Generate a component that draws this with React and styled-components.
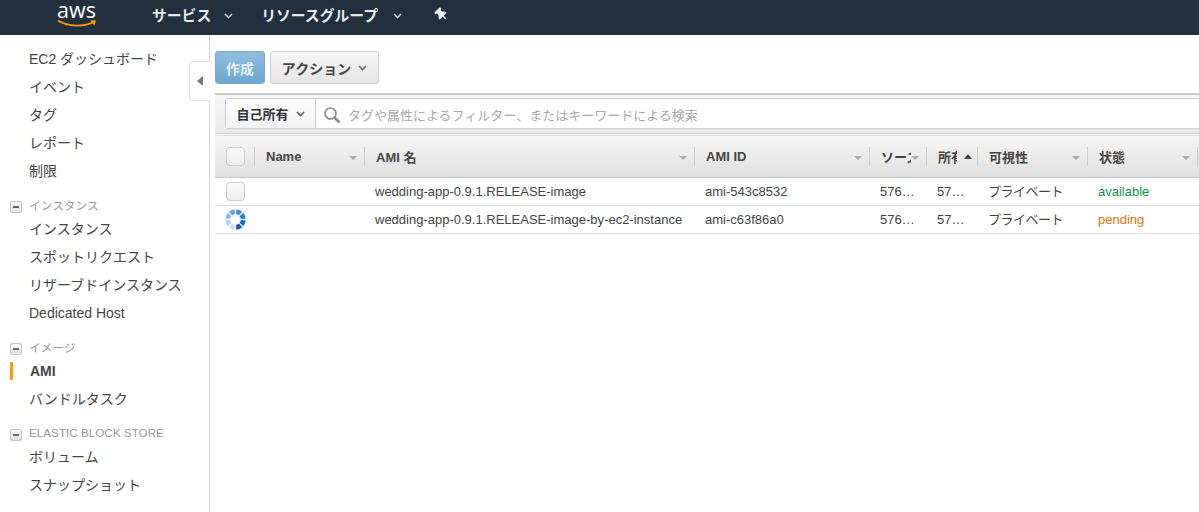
import React from "react";
import styled, { createGlobalStyle } from "styled-components";
import { FaThumbtack } from "react-icons/fa";

const GlobalStyle = createGlobalStyle`
  html, body {
    margin: 0;
    padding: 0;
    height: 100%;
    overflow: hidden;
    background: #fff;
  }
  body {
    font-family: "Liberation Sans", "Noto Sans CJK JP", sans-serif;
    color: #444;
  }
`;

const columnTemplate = "40px 110px 330px 175px 57px 51px 110px 110px";

const columns = [
  { label: "Name" },
  { label: "AMI 名" },
  { label: "AMI ID" },
  { label: "ソース", clip: 16 },
  { label: "所有者", clip: 21, sorted: true },
  { label: "可視性" },
  { label: "状態" },
];

const images = [
  {
    name: "wedding-app-0.9.1.RELEASE-image",
    id: "ami-543c8532",
    state: "available",
  },
  {
    name: "wedding-app-0.9.1.RELEASE-image-by-ec2-instance",
    id: "ami-c63f86a0",
    state: "pending",
    busy: true,
  },
];

const Page = styled.div`
  width: 1199px;
  height: 512px;
  display: flex;
  flex-direction: column;
  overflow: hidden;
`;

const TopBar = styled.header`
  flex: none;
  height: 35px;
  box-sizing: border-box;
  padding-bottom: 7px;
  background: #232f3e;
  display: flex;
  align-items: center;
  color: #fff;
`;

const Logo = styled.div`
  width: 39px;
  height: 27px;
  margin-left: 57px;
  display: flex;
  flex-direction: column;
  align-items: center;
`;

const LogoText = styled.span`
  font-family: "Open Sans", sans-serif;
  font-size: 21.5px;
  line-height: 18px;
`;

const NavItem = styled.div`
  display: flex;
  align-items: center;
  margin-left: ${(p) => p.$offset}px;
  font-size: 14.8px;
  font-weight: 700;
  color: #e8eaec;
`;

const NavChevron = styled.svg`
  width: 9px;
  height: 6px;
  margin: 3px 0 0 ${(p) => p.$gap}px;
  fill: none;
  stroke: #d5d9dd;
  stroke-width: 1.5;
`;

const Pin = styled(FaThumbtack)`
  width: 13px;
  height: 13px;
  margin-left: 33px;
  transform: rotate(-45deg);
  color: #eef0f2;
`;

const Body = styled.div`
  flex: 1;
  display: flex;
  min-height: 0;
`;

const Sidebar = styled.nav`
  flex: none;
  position: relative;
  width: 209px;
  padding-top: 10px;
  border-right: 1px solid #d5d5d5;
`;

const NavLink = styled.div`
  position: relative;
  height: 28px;
  line-height: 28px;
  padding-left: 29px;
  font-size: 14px;
  color: #444;
  ${(p) =>
    p.$active &&
    `
    font-weight: 700;
    padding-left: 30px;
    &::before {
      content: "";
      position: absolute;
      left: 10px;
      top: 5px;
      width: 3px;
      height: 18px;
      border-radius: 1px;
      background: #ff9900;
    }
    &::after {
      content: "";
      position: absolute;
      left: 186px;
      top: 5px;
      width: 1px;
      height: 16px;
      border-top: 1px solid #fde6cc;
      border-bottom: 1px solid #fde6cc;
    }
  `}
`;

const SectionTitle = styled.div`
  height: 20px;
  box-sizing: border-box;
  margin-top: 10px;
  padding: 0 0 2px 10px;
  display: flex;
  align-items: center;
  font-size: 11.7px;
  color: #999;
`;

const Collapse = styled.span`
  width: 12px;
  height: 12px;
  box-sizing: border-box;
  margin: 5px 7px 0 0;
  border: 1px solid #c4c4c4;
  border-radius: 2px;
  background: linear-gradient(#fafafa, #e2e2e2);
  display: flex;
  align-items: center;
  justify-content: center;
  &::after {
    content: "";
    width: 6px;
    height: 2px;
    background: #666;
  }
`;

const SideToggle = styled.div`
  position: absolute;
  top: 26px;
  right: -1px;
  width: 21px;
  height: 40px;
  box-sizing: border-box;
  background: #fff;
  border: 1px solid #ddd;
  border-right: 1px solid #fff;
  border-radius: 4px 0 0 4px;
  display: flex;
  align-items: center;
  justify-content: center;
  &::after {
    content: "";
    border-style: solid;
    border-width: 5px 6px 5px 0;
    border-color: transparent #777 transparent transparent;
  }
`;

const Main = styled.main`
  flex: 1;
  min-width: 0;
  padding: 16px 0 0 5px;
`;

const Toolbar = styled.div`
  display: flex;
  gap: 5px;
  height: 33px;
  margin-bottom: 9px;
`;

const Button = styled.div`
  box-sizing: border-box;
  height: 33px;
  border-radius: 3px;
  display: flex;
  align-items: center;
  justify-content: center;
  font-size: 14px;
  font-weight: 700;
`;

const CreateButton = styled(Button)`
  width: 50px;
  color: #e6f0f7;
  background: linear-gradient(#90bedd, #6fa6cf);
  border: 1px solid #7aa9cc;
`;

const ActionButton = styled(Button)`
  width: 109px;
  gap: 7px;
  color: #444;
  background: linear-gradient(#f6f6f6, #e5e5e5);
  border: 1px solid #ccc;
`;

const Caret = styled.svg`
  width: 9px;
  height: 6px;
  fill: none;
  stroke: #666;
  stroke-width: 1.6;
`;

const FilterBar = styled.div`
  height: 41px;
  padding: 3px 0 0 10px;
  box-sizing: border-box;
  display: flex;
  align-items: flex-start;
  border-top: 2px solid #c8c8c8;
  background: linear-gradient(#f7f7f7, #eaeaea);
  border-bottom: 1px solid #ccc;
`;

const FilterGroup = styled.div`
  flex: 1;
  display: flex;
  height: 31px;
  margin-right: -4px;
  background: #fff;
  border: 1px solid #ccc;
  border-radius: 3px 0 0 3px;
  box-sizing: border-box;
`;

const OwnerSelect = styled.div`
  width: 90px;
  flex: none;
  display: flex;
  align-items: center;
  justify-content: center;
  gap: 7px;
  font-size: 13px;
  font-weight: 700;
  color: #333;
  background: linear-gradient(#fdfdfd, #f2f2f2);
  border-right: 1px solid #ccc;
  box-sizing: border-box;
`;

const SearchField = styled.div`
  flex: 1;
  display: flex;
  align-items: center;
  gap: 7px;
  padding: 2px 0 0 7px;
  font-size: 13px;
  color: #aaa;
`;

const SearchIcon = styled.svg`
  width: 18px;
  height: 18px;
  fill: none;
  stroke: #8b8b8b;
`;

const HeaderRow = styled.div`
  display: grid;
  grid-template-columns: ${columnTemplate};
  height: 43px;
  margin-top: 1px;
  box-sizing: border-box;
  background: linear-gradient(#f6f6f6, #e0e0e0);
  border-bottom: 1px solid #c4c4c4;
  border-top: 1px solid #ddd;
`;

const HeadCell = styled.div`
  position: relative;
  display: flex;
  align-items: center;
  min-width: 0;
  padding: 0 ${(p) => p.$clip || 22}px 0 11px;
  font-size: 13px;
  font-weight: 700;
  color: #444;
  &::after {
    content: "";
    position: absolute;
    right: 0;
    top: 11px;
    height: 19px;
    width: 1px;
    background: #ccc;
  }
`;

const HeadLabel = styled.span`
  overflow: hidden;
  white-space: nowrap;
`;

const SortArrow = styled.span`
  position: absolute;
  right: 8px;
  top: 20px;
  border-style: solid;
  ${(p) =>
    p.$up
      ? "border-width: 0 4px 5px 4px; border-color: transparent transparent #444 transparent; top: 18px; right: 6px;"
      : "border-width: 4px 4px 0 4px; border-color: #aaa transparent transparent transparent;"}
`;

const CheckCell = styled.div`
  position: relative;
  display: flex;
  align-items: center;
  padding-left: 11px;
`;

const HeadCheckCell = styled(CheckCell)`
  &::after {
    content: "";
    position: absolute;
    right: 0;
    top: 11px;
    height: 19px;
    width: 1px;
    background: #ccc;
  }
`;

const CheckBox = styled.span`
  width: 19px;
  height: 19px;
  box-sizing: border-box;
  border: 1px solid #ccc;
  border-radius: 4px;
  background: linear-gradient(#fafafa, #eeeeee);
`;

const Row = styled.div`
  display: grid;
  grid-template-columns: ${columnTemplate};
  height: 28px;
  box-sizing: border-box;
  border-bottom: 1px solid #ddd;
  font-size: 13px;
  color: #444;
`;

const Cell = styled.div`
  display: flex;
  align-items: center;
  padding-left: 10px;
  min-width: 0;
  white-space: nowrap;
  color: ${(p) => p.$color || "inherit"};
`;

const VisibilityCell = styled(Cell)`
  padding-bottom: 2px;
  letter-spacing: -0.5px;
`;

const Spinner = styled.svg`
  width: 21px;
  height: 21px;
  margin-left: -1px;
`;

function Chevron({ as: Comp = Caret, ...rest }) {
  return (
    <Comp viewBox="0 0 9 6" {...rest}>
      <path d="M1 1l3.5 3.5L8 1" />
    </Comp>
  );
}

function LoadingSpinner() {
  const shades = ["#4a90d0", "#2f7cc4", "#1c69b8", "#0f5cad", "#cfe0f1", "#b6d2ea", "#8fb9df", "#6ba3d6"];
  return (
    <Spinner viewBox="-10.5 -10.5 21 21">
      {shades.map((fill, i) => (
        <path
          key={i}
          d="M-3.6 -9.9 A10.5 10.5 0 0 1 3.6 -9.9 L1.7 -4.7 A5 5 0 0 0 -1.7 -4.7 Z"
          fill={fill}
          stroke="#fff"
          strokeWidth="0.5"
          transform={`rotate(${i * 45 + 22.5})`}
        />
      ))}
    </Spinner>
  );
}

function App() {
  return (
    <>
      <GlobalStyle />
      <Page>
        <TopBar>
          <Logo>
            <LogoText>aws</LogoText>
            <svg width="40" height="9" viewBox="0 0 40 9">
              <path d="M1 1.5C11 8 27 8 37 3" fill="none" stroke="#ff9900" strokeWidth="1.8" />
              <path d="M33 1.2L39 1.2L37.5 6.5Z" fill="#ff9900" />
            </svg>
          </Logo>
          <NavItem $offset={56}>
            サービス
            <Chevron as={NavChevron} $gap={13} />
          </NavItem>
          <NavItem $offset={28}>
            リソースグループ
            <Chevron as={NavChevron} $gap={15} />
          </NavItem>
          <Pin />
        </TopBar>
        <Body>
          <Sidebar>
            <NavLink>EC2 ダッシュボード</NavLink>
            <NavLink>イベント</NavLink>
            <NavLink>タグ</NavLink>
            <NavLink>レポート</NavLink>
            <NavLink>制限</NavLink>
            <SectionTitle>
              <Collapse />
              インスタンス
            </SectionTitle>
            <NavLink>インスタンス</NavLink>
            <NavLink>スポットリクエスト</NavLink>
            <NavLink>リザーブドインスタンス</NavLink>
            <NavLink>Dedicated Host</NavLink>
            <SectionTitle>
              <Collapse />
              イメージ
            </SectionTitle>
            <NavLink $active>AMI</NavLink>
            <NavLink>バンドルタスク</NavLink>
            <SectionTitle>
              <Collapse />
              ELASTIC BLOCK STORE
            </SectionTitle>
            <NavLink>ボリューム</NavLink>
            <NavLink>スナップショット</NavLink>
            <SideToggle />
          </Sidebar>
          <Main>
            <Toolbar>
              <CreateButton>作成</CreateButton>
              <ActionButton>
                アクション
                <Chevron />
              </ActionButton>
            </Toolbar>
            <FilterBar>
              <FilterGroup>
                <OwnerSelect>
                  自己所有
                  <Chevron />
                </OwnerSelect>
                <SearchField>
                  <SearchIcon viewBox="0 0 18 18">
                    <circle cx="7.5" cy="7.5" r="5.5" strokeWidth="1.6" />
                    <path d="M11.5 11.5L16.5 16.5" strokeWidth="2.6" />
                  </SearchIcon>
                  タグや属性によるフィルター、またはキーワードによる検索
                </SearchField>
              </FilterGroup>
            </FilterBar>
            <HeaderRow>
              <HeadCheckCell>
                <CheckBox />
              </HeadCheckCell>
              {columns.map((col) => (
                <HeadCell key={col.label} $clip={col.clip}>
                  <HeadLabel>{col.label}</HeadLabel>
                  <SortArrow $up={col.sorted} />
                </HeadCell>
              ))}
            </HeaderRow>
            {images.map((img) => (
              <Row key={img.id}>
                <CheckCell>{img.busy ? <LoadingSpinner /> : <CheckBox />}</CheckCell>
                <Cell />
                <Cell>{img.name}</Cell>
                <Cell>{img.id}</Cell>
                <Cell>576…</Cell>
                <Cell>57…</Cell>
                <VisibilityCell>プライベート</VisibilityCell>
                <Cell $color={img.busy ? "#e8710a" : "#12913f"}>{img.state}</Cell>
              </Row>
            ))}
          </Main>
        </Body>
      </Page>
    </>
  );
}

export default App;
